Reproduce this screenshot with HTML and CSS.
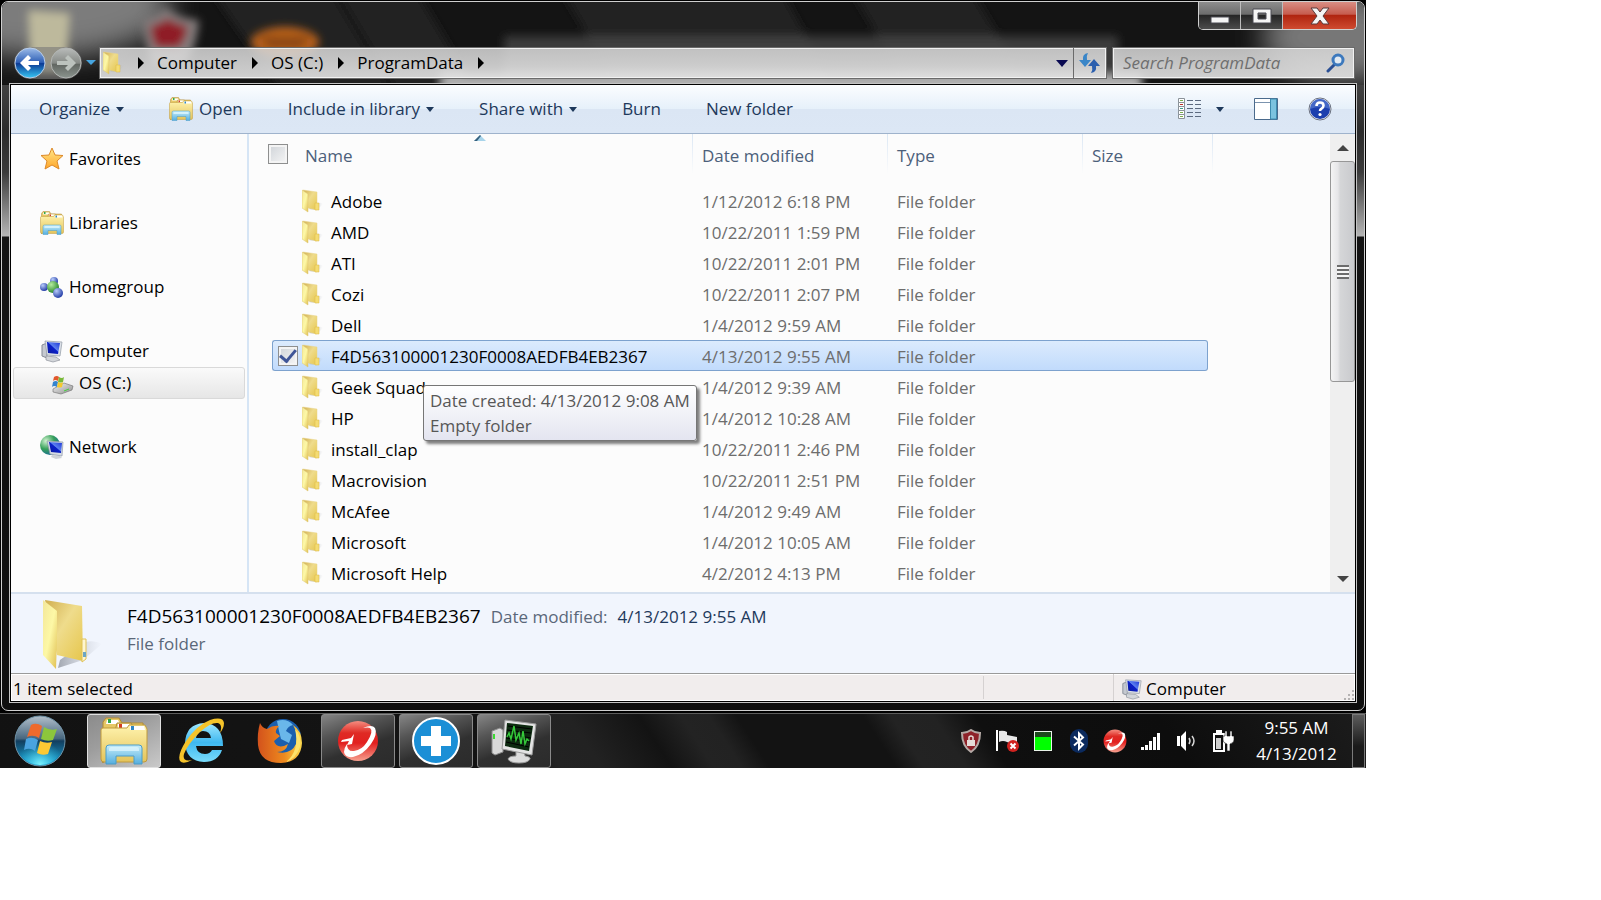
FILE: index.html
```
<!DOCTYPE html>
<html lang="en">

<head>
  <meta charset="UTF-8">
  <meta name="viewport" content="width=device-width, initial-scale=1.0">
  <title>ProgramData</title>
  <link rel="stylesheet" href="styles.css">
</head>

<body>
  <!-- Shared icons -->
  <svg class="sprite" width="0" height="0" aria-hidden="true">
    <defs>
      <linearGradient id="gFlap" x1="0" x2="1" y1="0" y2="1">
        <stop offset="0" stop-color="#f3e79b" />
        <stop offset=".5" stop-color="#fdf8a6" />
        <stop offset="1" stop-color="#e0bf53" />
      </linearGradient>
      <linearGradient id="gBack" x1="0" x2="1" y1="0" y2="1">
        <stop offset="0" stop-color="#d0ae50" />
        <stop offset=".45" stop-color="#efdc8c" />
        <stop offset="1" stop-color="#e6c64c" />
      </linearGradient>
      <linearGradient id="gShade" x1="0" x2="1">
        <stop offset="0" stop-color="#8f949e" stop-opacity=".8" />
        <stop offset="1" stop-color="#b8bcc6" stop-opacity="0" />
      </linearGradient>
      <linearGradient id="gPaper" x1="0" x2="0" y1="0" y2="1">
        <stop offset="0" stop-color="#fff3ae" />
        <stop offset="1" stop-color="#e4c45b" />
      </linearGradient>
      <linearGradient id="gStand" x1="0" x2="0" y1="0" y2="1">
        <stop offset="0" stop-color="#c5edfa" />
        <stop offset="1" stop-color="#55aede" />
      </linearGradient>
      <linearGradient id="gScreen" x1="0" x2="1" y1="1" y2="0">
        <stop offset="0" stop-color="#0a1a9a" />
        <stop offset=".5" stop-color="#0b1fc9" />
        <stop offset=".55" stop-color="#5c80ee" />
        <stop offset="1" stop-color="#1b35d8" />
      </linearGradient>
      <linearGradient id="gStar" x1="0" x2="0" y1="0" y2="1">
        <stop offset="0" stop-color="#ffe98a" />
        <stop offset="1" stop-color="#ffa52a" />
      </linearGradient>
      <linearGradient id="gSteel" x1="0" x2="1" y1="0" y2="1">
        <stop offset="0" stop-color="#f5f5f5" />
        <stop offset="1" stop-color="#8d8d8d" />
      </linearGradient>
      <linearGradient id="gBackBtn" x1="0" x2="0" y1="0" y2="1">
        <stop offset="0" stop-color="#9cbbe8" />
        <stop offset=".48" stop-color="#2f60b6" />
        <stop offset=".52" stop-color="#0b3a94" />
        <stop offset="1" stop-color="#38c8f5" />
      </linearGradient>
      <linearGradient id="gFwdBtn" x1="0" x2="0" y1="0" y2="1">
        <stop offset="0" stop-color="#b9bcba" />
        <stop offset=".5" stop-color="#868a86" />
        <stop offset=".55" stop-color="#626762" />
        <stop offset="1" stop-color="#8b948e" />
      </linearGradient>
      <radialGradient id="gGreenBall" cx=".35" cy=".3" r=".8">
        <stop offset="0" stop-color="#b5eda0" />
        <stop offset="1" stop-color="#157a1c" />
      </radialGradient>
      <radialGradient id="gBlueBall" cx=".35" cy=".3" r=".8">
        <stop offset="0" stop-color="#b9cdfa" />
        <stop offset="1" stop-color="#122c9e" />
      </radialGradient>
      <radialGradient id="gGlobe" cx=".3" cy=".3" r=".9">
        <stop offset="0" stop-color="#d2f3d0" />
        <stop offset=".45" stop-color="#37a05a" />
        <stop offset="1" stop-color="#0c57ae" />
      </radialGradient>
      <linearGradient id="gOrb" x1="0" x2="0" y1="0" y2="1">
        <stop offset="0" stop-color="#b3c0cb" />
        <stop offset=".45" stop-color="#48677f" />
        <stop offset=".5" stop-color="#123e5f" />
        <stop offset="1" stop-color="#17a9dc" />
      </linearGradient>
      <radialGradient id="gOrbGlow" cx=".5" cy="1" r=".5">
        <stop offset="0" stop-color="#7ff4ff" />
        <stop offset="1" stop-color="#2fc4ee" stop-opacity="0" />
      </radialGradient>
      <linearGradient id="gIe" x1="0" x2="0" y1="0" y2="1">
        <stop offset="0" stop-color="#9fe8ff" />
        <stop offset=".5" stop-color="#3fb8f0" />
        <stop offset="1" stop-color="#7adcfb" />
      </linearGradient>
      <linearGradient id="gFox" x1="0" x2="1">
        <stop offset="0" stop-color="#d3521c" />
        <stop offset=".6" stop-color="#ee8a1e" />
        <stop offset="1" stop-color="#fbd84a" />
      </linearGradient>
      <linearGradient id="gRed" x1="0" x2="0" y1="0" y2="1">
        <stop offset="0" stop-color="#f58d80" />
        <stop offset=".3" stop-color="#df2a24" />
        <stop offset=".55" stop-color="#e2201f" />
        <stop offset="1" stop-color="#f7a08f" />
      </linearGradient>

      <symbol id="folder" viewBox="0 0 64 72">
        <path d="M43 62 L62 46 Q55 42 45 44 L20 62 L18 70Z" fill="url(#gShade)" />
        <path d="M5 2 L42 8 L43 63 L17 57Z" fill="url(#gBack)" />
        <path d="M42 41h4v20l-4 3z" fill="#fff6cf" stroke="#dfc257" />
        <path d="M43 54h3v5h-3z" fill="#6ba6c4" />
        <path d="M3 2 L17 13 L17 43 L16 71 L3 57Z" fill="url(#gFlap)" />
      </symbol>

      <symbol id="folder-small" viewBox="0 0 21 24">
        <path d="M15 21l6-6q-2-2-5-1L7 20z" fill="url(#gShade)" />
        <path d="M1 1l14 2v18L6 19z" fill="url(#gBack)" stroke="#e9d58a" stroke-width=".5" />
        <path d="M13 14h4v7h-4z" fill="#f4dc73" stroke="#dcbb45" stroke-width=".5" />
        <path d="M0 1l6 4v18l-6-4z" fill="url(#gFlap)" stroke="#dcc772" stroke-width=".5" />
      </symbol>

      <symbol id="library" viewBox="0 0 48 48">
        <path d="M3 46V5l3-4h13l3 5h21v14H3z" fill="#e6c765" stroke="#b08a35" />
        <path d="M7 3h11l2 4H6z" fill="#fff" />
        <path d="M8 2h3v4H8z" fill="#2fa84a" />
        <path d="M15 14l2-8h14l3 5h10v10H15z" fill="#efd67c" stroke="#b08a35" />
        <path d="M18 7h11l3 4H18z" fill="#fff" />
        <path d="M19 7h3v4h-3z" fill="#d23b23" />
        <path d="M1 13q0-2 2-2h24l2-3h16l2 4v30q0 3-3 3H4q-3 0-3-3z" fill="url(#gPaper)" stroke="#c09a3d" />
        <path d="M30 9h14l1 4H30z" fill="#fff" />
        <path d="M31 9h3v4h-3z" fill="#2f86c4" />
        <path d="M6 47V31q0-3 3-3h30q3 0 3 3v16h-8v-8H16v8z" fill="url(#gStand)" stroke="#4b9cc9" />
        <path d="M9 34v-2q0-2 2-2h26q2 0 2 2v2z" fill="#e3f8ff" opacity=".7" />
      </symbol>

      <symbol id="computer" viewBox="0 0 24 24">
        <path d="M2 6l5-2v15l-5-2z" fill="#c5c9d0" stroke="#858b96" />
        <path d="M6 17l10 1 4 3-7 2-7-2z" fill="#d3d6da" stroke="#8f949c" stroke-width=".7" />
        <path d="M5 2l17 1-2 14-13-1z" fill="#dce1e8" stroke="#9ca3ad" stroke-width=".8" />
        <path d="M7 3l13 1-2 11-10-1z" fill="url(#gScreen)" />
      </symbol>

      <symbol id="trend" viewBox="0 0 42 42">
        <circle cx="21" cy="21" r="20" fill="url(#gRed)" />
        <path d="M26 8q9-4 12 0 3 6-4 16-8 11-18 13-8 1-9-5 0-4 3-8 0 8 7 7 8-1 13-9 7-11 3-14-2-1-7 0z" fill="#fff" />
        <path d="M5 20l9-2 3-4-2 10-5 1 2-4-8 1z" fill="#fff" />
      </symbol>
    </defs>
  </svg>

  <div class="desktop">
    <section class="window" aria-label="ProgramData">
      <!-- What shows through the glass -->
      <svg class="glass" aria-hidden="true">
        <defs>
          <filter id="soft" x="-20%" y="-20%" width="140%" height="140%">
            <feGaussianBlur stdDeviation="4" />
          </filter>
          <filter id="softer" x="-40%" y="-40%" width="180%" height="180%">
            <feGaussianBlur stdDeviation="14" />
          </filter>
        </defs>
        <rect width="100%" height="90" fill="#141414" />
        <g filter="url(#soft)">
          <path d="M210-10h120l60 100H280zM335-10h80l60 100h-80zM560-10h220l55 100H620zM850-10h120l60 100H910z" fill="#242424" />
          <rect x="502" y="34" width="614" height="60" fill="#4c4c4c" opacity=".7" />
          <rect x="440" y="72" width="700" height="20" fill="#b0b0b0" />
        </g>
        <ellipse cx="40" cy="5" rx="130" ry="50" fill="#7b7b7b" filter="url(#softer)" />
        <ellipse cx="1340" cy="35" rx="80" ry="45" fill="#777" filter="url(#softer)" />
        <g filter="url(#soft)">
          <path d="M26 8l42 3-4 60H28z" fill="#bdb99c" />
          <path d="M163 6q14 11 34 12-3 30-15 45h-32q-7-20-9-45 14-3 22-12z" fill="#857f7f" />
          <path d="M165 16q10 6 21 8-2 16-10 22h-22q-5-10-6-22 10-2 17-8z" fill="#8f1f26" />
          <ellipse cx="283" cy="40" rx="34" ry="15" fill="#bd641d" />
          <path d="M258 37h50M264 44h38" stroke="#5b2c0c" stroke-width="4" />
        </g>
      </svg>

      <header class="titlebar">
        <div class="captions">
          <button type="button" class="caption caption-min" aria-label="Minimize">
            <svg width="20" height="20" viewBox="0 0 20 20">
              <path d="M1 11h18v6H1z" fill="#f5f5f5" stroke="#4a4a52" />
            </svg>
          </button>
          <button type="button" class="caption caption-max" aria-label="Maximize">
            <svg width="20" height="18" viewBox="0 0 20 18">
              <path d="M1 2h18v14H1zM6 6v6h8V6z" fill="#f5f5f5" stroke="#4a4a52" fill-rule="evenodd" />
            </svg>
          </button>
          <button type="button" class="caption caption-close" aria-label="Close">
            <svg width="20" height="18" viewBox="0 0 20 18">
              <path d="M1 1h6l3 4 3-4h6l-6 8 6 8h-6l-3-4-3 4H1l6-8z" fill="#f5f5f5" stroke="#5a3b3b" />
            </svg>
          </button>
        </div>

        <div class="nav-row">
          <div class="nav-buttons">
            <button type="button" class="round" aria-label="Back">
              <svg width="32" height="32" viewBox="0 0 32 32">
                <circle cx="16" cy="16" r="15" fill="url(#gBackBtn)" stroke="#b9cde8" />
                <path d="M6 16l8-8 3 3-3 3h11v4H14l3 3-3 3z" fill="#fff" />
              </svg>
            </button>
            <button type="button" class="round" aria-label="Forward">
              <svg width="32" height="32" viewBox="0 0 32 32">
                <circle cx="16" cy="16" r="15" fill="url(#gFwdBtn)" stroke="#b3b6b4" />
                <path d="M26 16l-8-8-3 3 3 3H7v4h11l-3 3 3 3z" fill="#bcc2bd" />
              </svg>
            </button>
          </div>
          <button type="button" class="recent" aria-label="Recent pages">
            <svg width="10" height="6" viewBox="0 0 10 6">
              <path d="M0 0h10L5 5z" fill="#46a5e0" />
            </svg>
          </button>

          <nav class="address" aria-label="Address">
            <svg class="address-icon" width="21" height="24">
              <use href="#folder-small" />
            </svg>
            <span class="crumb-arrow"></span>
            <a class="crumb" href="#">Computer</a>
            <span class="crumb-arrow"></span>
            <a class="crumb" href="#">OS (C:)</a>
            <span class="crumb-arrow"></span>
            <a class="crumb" href="#">ProgramData</a>
            <span class="crumb-arrow"></span>
            <button type="button" class="address-drop" aria-label="Previous locations">
              <svg width="12" height="7" viewBox="0 0 12 7">
                <path d="M0 0h12L6 7z" fill="#0a0a52" />
              </svg>
            </button>
            <button type="button" class="refresh" aria-label="Refresh">
              <svg width="22" height="20" viewBox="0 0 22 20">
                <path d="M9 0Q3 1 4 7H0l6 7 6-7H8Q7 3 9 0z" fill="#3a86c8" />
                <path d="M12 20q6-1 5-7h4l-6-7-6 7h4q1 4-1 7z" fill="#2b5fae" />
              </svg>
            </button>
          </nav>

          <div class="search">
            <input type="search" placeholder="Search ProgramData" aria-label="Search ProgramData">
            <svg width="20" height="20" viewBox="0 0 20 20">
              <path d="M8 12l-6 6" stroke="#2a4f94" stroke-width="3" stroke-linecap="round" />
              <circle cx="12" cy="7" r="5" fill="#e2eaf2" stroke="#3d79bd" stroke-width="3" />
            </svg>
          </div>
        </div>
      </header>

      <div class="frame">
        <div class="toolbar">
          <button type="button" class="tool">Organize <span class="caret"></span></button>
          <button type="button" class="tool">
            <svg width="24" height="24">
              <use href="#library" />
            </svg>
            Open
          </button>
          <button type="button" class="tool">Include in library <span class="caret"></span></button>
          <button type="button" class="tool">Share with <span class="caret"></span></button>
          <button type="button" class="tool">Burn</button>
          <button type="button" class="tool">New folder</button>

          <div class="tool-icons">
            <button type="button" class="tool-icon" aria-label="Change your view">
              <svg width="24" height="22" viewBox="0 0 24 22">
                <path d="M.5.5h6v4h-6zM.5 4.500h6v4h-6zM.5 8.500h6v4h-6zM.5 12.500h6v4h-6zM.5 16.500h6v4h-6z" fill="#fff" stroke="#8a9299" />
                <path d="M2 2.500h3M2 14.500h3M2 18.500h3" stroke="#7bb04a" />
                <path d="M2 6.500h3" stroke="#c03028" />
                <path d="M2 10.500h3" stroke="#3e9a8a" />
                <path d="M9 2.500h6M17 2.500h6M9 6.500h6M17 6.500h6M9 10.500h6M17 10.500h6M9 14.500h6M17 14.500h6M9 18.500h6M17 18.500h6" stroke="#5d6b80" />
              </svg>
            </button>
            <button type="button" class="tool-icon" aria-label="More view options"><span class="caret"></span></button>
            <button type="button" class="tool-icon preview" aria-label="Show the preview pane">
              <svg width="24" height="22" viewBox="0 0 24 22">
                <path d="M.5.5h23v21H.5z" fill="#fff" stroke="#4a6a8c" />
                <path d="M1 4.500h15" stroke="#7b93ae" />
                <path d="M16.500 1h6v20h-6z" fill="#7cc3df" stroke="#3e8db0" />
              </svg>
            </button>
            <button type="button" class="tool-icon help" aria-label="Help">
              <svg width="24" height="24" viewBox="0 0 24 24">
                <circle cx="12" cy="12" r="11" fill="#f2f4f8" stroke="#6a7180" />
                <circle cx="12" cy="12" r="10" fill="#1c3fae" />
                <path d="M2 12a10 10 0 0 1 20 0q-10-4-20 0z" fill="#5f83d6" opacity=".6" />
                <path d="M8.500 9q0-3.500 3.500-3.500t3.500 3q0 2-2 3.200-1.500 1-1.500 2.300" fill="none" stroke="#fff" stroke-width="2.600" />
                <circle cx="12" cy="17.500" r="1.600" fill="#fff" />
              </svg>
            </button>
          </div>
        </div>

        <div class="browser">
          <nav class="sidebar" aria-label="Navigation pane">
            <a class="place" href="#">
              <svg width="24" height="24" viewBox="0 0 24 24">
                <path d="M12 1l3 7 8 .5-6 5.500 2 8-7-4-7 4 2-8-6-5.500L9 8z" fill="url(#gStar)" stroke="#dd8a2a" />
              </svg>
              Favorites
            </a>
            <a class="place" href="#">
              <svg width="24" height="24">
                <use href="#library" />
              </svg>
              Libraries
            </a>
            <a class="place" href="#">
              <svg width="24" height="24" viewBox="0 0 24 24">
                <circle cx="14" cy="6" r="4" fill="url(#gBlueBall)" />
                <circle cx="4" cy="12" r="4" fill="url(#gBlueBall)" />
                <circle cx="13" cy="12" r="6" fill="url(#gGreenBall)" />
                <circle cx="18" cy="18" r="5" fill="url(#gBlueBall)" />
              </svg>
              Homegroup
            </a>
            <div class="place-group">
              <a class="place" href="#">
                <svg width="24" height="24">
                  <use href="#computer" />
                </svg>
                Computer
              </a>
              <a class="place place-sub" href="#" aria-current="true">
                <svg width="24" height="24" viewBox="0 0 24 24">
                  <path d="M3 18l11-6 9 3-1 4-11 4-8-2z" fill="url(#gSteel)" stroke="#6c6c6c" stroke-width=".6" />
                  <path d="M14 20l5-2" stroke="#42d13a" />
                  <path d="M4 6q3-2 5 0l-1 4q-3-2-5 0z" fill="#e2572b" />
                  <path d="M9 6q3 2 5 0l-1 5q-3 1-5 0z" fill="#79b938" />
                  <path d="M3 11q3-2 5 0l-1 5q-3-2-5 0z" fill="#3484ce" />
                  <path d="M8 11q3 2 5 0l-1 5q-3 1-5 0z" fill="#f5c92f" />
                </svg>
                OS (C:)
              </a>
            </div>
            <a class="place" href="#">
              <svg width="24" height="24" viewBox="0 0 24 24">
                <circle cx="10" cy="10" r="10" fill="url(#gGlobe)" />
                <path d="M12 20l8 1 2 2-6 1-5-2z" fill="#cfd3d8" />
                <path d="M7 6l16 1-1 14-12-2z" fill="#d5dbe4" stroke="#8f98a6" stroke-width=".7" />
                <path d="M9 7l13 1-1 10-10-1z" fill="url(#gScreen)" />
              </svg>
              Network
            </a>
          </nav>

          <div class="files">
            <table class="file-table">
              <colgroup>
                <col class="col-name">
                <col class="col-date">
                <col class="col-type">
                <col class="col-size">
              </colgroup>
              <thead>
                <tr>
                  <th scope="col">
                    <div class="head-name">
                      <input type="checkbox" aria-label="Select all items">
                      Name
                      <svg class="sort" width="12" height="6" viewBox="0 0 12 6">
                        <path d="M6 0l6 6H0z" fill="#a8d4ea" />
                        <path d="M6 0L0 6h3l4-5z" fill="#36617e" />
                      </svg>
                    </div>
                  </th>
                  <th scope="col">Date modified</th>
                  <th scope="col">Type</th>
                  <th scope="col">Size</th>
                </tr>
              </thead>
              <tbody id="fileRows"></tbody>
            </table>

            <div class="tooltip" role="tooltip">
              Date created: 4/13/2012 9:08 AM<br>
              Empty folder
            </div>
          </div>

          <div class="scrollbar">
            <button type="button" class="scroll-btn" aria-label="Scroll up">
              <svg width="12" height="6" viewBox="0 0 12 6">
                <path d="M6 0l6 6H0z" fill="#444" />
              </svg>
            </button>
            <div class="thumb"><span class="grip"></span></div>
            <button type="button" class="scroll-btn scroll-down" aria-label="Scroll down">
              <svg width="12" height="6" viewBox="0 0 12 6">
                <path d="M0 0h12L6 6z" fill="#444" />
              </svg>
            </button>
          </div>
        </div>

        <div class="details">
          <svg width="64" height="72">
            <use href="#folder" />
          </svg>
          <div class="details-text">
            <div class="details-line">
              <span class="details-name">F4D563100001230F0008AEDFB4EB2367</span>
              <span>Date modified:</span>
              <span class="details-value">4/13/2012 9:55 AM</span>
            </div>
            <div>File folder</div>
          </div>
        </div>

        <footer class="status">
          <div class="status-main">1 item selected</div>
          <div class="status-gap"></div>
          <div class="status-zone">
            <svg width="22" height="22">
              <use href="#computer" />
            </svg>
            Computer
            <svg class="resize" width="12" height="12" viewBox="0 0 12 12">
              <path d="M9 1h2v2H9zM5 5h2v2H5zM9 5h2v2H9zM1 9h2v2H1zM5 9h2v2H5zM9 9h2v2H9z" fill="#b5b2b2" />
            </svg>
          </div>
        </footer>
      </div>
    </section>

    <footer class="taskbar">
      <button type="button" class="start" aria-label="Start">
        <svg width="52" height="52" viewBox="0 0 52 52">
          <circle cx="26" cy="26" r="25" fill="url(#gOrb)" stroke="#6f93a8" />
          <circle cx="26" cy="26" r="24" fill="url(#gOrbGlow)" />
          <path d="M17 10q5-3 11 1l-3 12q-6-4-12-1z" fill="#ee6a2c" />
          <path d="M30 12q6 4 13 2l-4 11q-6 2-12-1z" fill="#8cc63c" />
          <path d="M12 24q6-3 12 1l-3 11q-5-4-11-1z" fill="#4aa3e0" />
          <path d="M26 26q6 3 12 1l-4 12q-6 2-11-1z" fill="#fcc934" />
        </svg>
      </button>

      <button type="button" class="task task-active" aria-label="Windows Explorer">
        <svg width="48" height="48">
          <use href="#library" />
        </svg>
      </button>
      <button type="button" class="task" aria-label="Internet Explorer">
        <svg width="46" height="48" viewBox="0 0 46 48">
          <path d="M44 29H17q1 8 9 8 5 0 7-4h10q-4 12-18 12Q7 44 6 26 7 7 25 6q19 1 19 23zM17 21h15q-1-7-8-7-6 0-7 7z" fill="url(#gIe)" fill-rule="evenodd" />
          <path d="M13 43Q4 48 1 44-2 38 7 24 18 8 31 3q13-4 14 3 0 5-4 10 3-8-2-10-7-1-18 9Q8 28 5 37q-2 8 8 6z" fill="#f5c32a" />
        </svg>
      </button>
      <button type="button" class="task" aria-label="Firefox">
        <svg width="46" height="48" viewBox="0 0 46 48">
          <circle cx="26" cy="20" r="18" fill="#1a5fae" />
          <path d="M20 4q10-3 16 4-5 1-7 6l6 4-3 8-8-4-2-8z" fill="#69b7ea" />
          <path d="M3 6q2 5 7 6 6-4 12-3-4 4-3 7l4 3-6 5q2 7 10 5l4-2q-2 8-11 8 14 3 19-8 3-9-3-19 9 6 9 18-1 19-21 20Q3 46 1 28 0 16 3 6z" fill="url(#gFox)" />
          <path d="M38 12q7 7 5 18-4 12-14 15 14-11 9-33z" fill="#fde36c" />
        </svg>
      </button>
      <button type="button" class="task task-open" aria-label="Trend Micro">
        <svg width="42" height="42">
          <use href="#trend" />
        </svg>
      </button>
      <button type="button" class="task task-open" aria-label="Support">
        <svg width="48" height="48" viewBox="0 0 48 48">
          <circle cx="24" cy="24" r="23" fill="#1b8fd6" stroke="#fff" stroke-width="2" />
          <path d="M19 9h10v10h10v10H29v10H19V29H9V19h10z" fill="#fff" />
        </svg>
      </button>
      <button type="button" class="task task-open" aria-label="Resource Monitor">
        <svg width="46" height="46" viewBox="0 0 46 46">
          <path d="M1 13l8-3 3 2v22l-8 3-3-2z" fill="#d9d9d9" stroke="#8a8a8a" />
          <path d="M3 16v5" stroke="#3ddc34" stroke-width="2" />
          <path d="M25 33h8l1 5q6 1 5 3-2 4-11 4t-11-4q1-3 8-3z" fill="#dcdcdc" stroke="#9b9b9b" />
          <path d="M14 2l31 4-4 31-30-6z" fill="#e4e4e4" stroke="#9b9b9b" />
          <path d="M16 5l26 3-4 25-24-5z" fill="#0d2a10" />
          <path d="M17 8l24 3M16 12l24 3M16 16l24 4M15 20l24 4M15 24l23 5" stroke="#000" />
          <path d="M16 19l2-4 2 6 3-13 2 14 3-7 2 11 2-13 2 13 2-5 2 2" fill="none" stroke="#35c93a" stroke-width="1.500" />
        </svg>
      </button>

      <div class="tray">
        <button type="button" class="tray-icon" aria-label="Security">
          <svg width="20" height="24" viewBox="0 0 20 24">
            <path d="M10 1q4 3 9 3 0 13-9 19Q1 17 1 4q5 0 9-3z" fill="#8e2229" stroke="#b5aaa6" stroke-width="2" />
            <path d="M6 11h8v6H6z" fill="#e6dcd8" />
            <path d="M8 11V8q2-2 4 0v3" fill="none" stroke="#e6dcd8" stroke-width="1.500" />
          </svg>
        </button>
        <button type="button" class="tray-icon" aria-label="Action Center">
          <svg width="24" height="24" viewBox="0 0 24 24">
            <path d="M1 1h2v21H1z" fill="#fff" />
            <path d="M4 2q5-1 8 1v3l10 2v6q-5 2-10-1-4-2-8 0z" fill="#e9e9e9" />
            <circle cx="18" cy="17" r="6" fill="#d0221f" />
            <path d="M15.500 14.500l5 5m0-5l-5 5" stroke="#fff" stroke-width="2" />
          </svg>
        </button>
        <button type="button" class="tray-icon" aria-label="Activity">
          <svg width="18" height="20" viewBox="0 0 18 20">
            <path d="M0 0h18v20H0z" fill="#e9f3e9" />
            <path d="M1 1h16v5H1z" fill="#1c4a1c" />
            <path d="M1 6h16v13H1z" fill="#00ff00" />
          </svg>
        </button>
        <button type="button" class="tray-icon" aria-label="Bluetooth">
          <svg width="18" height="24" viewBox="0 0 18 24">
            <rect width="18" height="24" rx="9" fill="#0b2a5e" />
            <path d="M4 7.500l9 8-4 4v-15l4 4-9 8" fill="none" stroke="#fff" stroke-width="2" />
          </svg>
        </button>
        <button type="button" class="tray-icon" aria-label="Trend Micro">
          <svg width="24" height="24">
            <use href="#trend" />
          </svg>
        </button>
        <button type="button" class="tray-icon" aria-label="Network">
          <svg width="20" height="18" viewBox="0 0 20 18">
            <path d="M0 15h3v3H0zM4 13h3v5H4zM8 9h3v9H8zM12 5h3v13h-3zM16 1h3v17h-3z" fill="#fff" />
          </svg>
        </button>
        <button type="button" class="tray-icon" aria-label="Volume">
          <svg width="22" height="22" viewBox="0 0 22 22">
            <path d="M1 6h3v10H1zM5 6l5-5v20l-5-5z" fill="#fff" />
            <path d="M13 8q2 3 0 6M16 6q4 5 0 10" fill="none" stroke="#d5d5d5" stroke-width="1.500" />
          </svg>
        </button>
        <button type="button" class="tray-icon" aria-label="Power">
          <svg width="22" height="22" viewBox="0 0 22 22">
            <path d="M2 4h10v17H2zM5 1h4v2H5z" fill="none" stroke="#fff" stroke-width="2" />
            <path d="M4 8h5v11H4z" fill="#cfcfcf" />
            <path d="M13 1h2v5h3V1h2v5h2v4q0 3-4 4v7h-3v-7q-4-1-4-4V6h2z" fill="#fff" stroke="#111" stroke-width=".6" />
          </svg>
        </button>
      </div>

      <button type="button" class="clock">9:55 AM<br>4/13/2012</button>
      <button type="button" class="show-desktop" aria-label="Show desktop"></button>
    </footer>
  </div>

  <script>
    const files = [
      ['Adobe', '1/12/2012 6:18 PM'],
      ['AMD', '10/22/2011 1:59 PM'],
      ['ATI', '10/22/2011 2:01 PM'],
      ['Cozi', '10/22/2011 2:07 PM'],
      ['Dell', '1/4/2012 9:59 AM'],
      ['F4D563100001230F0008AEDFB4EB2367', '4/13/2012 9:55 AM', true],
      ['Geek Squad', '1/4/2012 9:39 AM'],
      ['HP', '1/4/2012 10:28 AM'],
      ['install_clap', '10/22/2011 2:46 PM'],
      ['Macrovision', '10/22/2011 2:51 PM'],
      ['McAfee', '1/4/2012 9:49 AM'],
      ['Microsoft', '1/4/2012 10:05 AM'],
      ['Microsoft Help', '4/2/2012 4:13 PM'],
      ['', '']
    ];

    // Build the folder list
    document.getElementById('fileRows').innerHTML = files.map(([name, date, selected]) => `
      <tr class="${selected ? 'selected' : ''}">
        <td>
          <label class="entry">
            <input type="checkbox" ${selected ? 'checked' : ''}>
            <svg width="21" height="24"><use href="#folder-small" /></svg>
            <span class="file-name">${name}</span>
          </label>
        </td>
        <td>${date}</td>
        <td>${name ? 'File folder' : ''}</td>
        <td><div class="row-end"></div></td>
      </tr>
    `).join('');
  </script>
</body>

</html>
```

FILE: styles.css
```
* {
  margin: 0;
  padding: 0;
  box-sizing: border-box;
}

body {
  font-family: "Open Sans", "Noto Sans", sans-serif;
  font-size: 17px;
  line-height: 24px;
  background: #fff;
  color: #000;
}

button {
  font: inherit;
  color: inherit;
  background: none;
  border: none;
  cursor: pointer;
}

a {
  color: inherit;
  text-decoration: none;
}

svg {
  display: block;
  flex: none;
}

.sprite {
  position: absolute;
}

.desktop {
  max-width: 1366px;
  padding-top: 1px;
  background: #000;
}

/* Window */
.window {
  position: relative;
  margin: 0 1px 2px;
  padding: 0 7px 7px;
  border: 1px solid #cfcfcf;
  border-radius: 7px;
  overflow: hidden;
  background: linear-gradient(#6a6a6a 0, #2b2b2b 130px, #3a3a3a 170px, #b5b5b5 234px, #141414 235px, #0e0e0e 100%);
}

.glass {
  position: absolute;
  top: 0;
  left: 0;
  width: 100%;
  height: 83px;
}

.titlebar {
  position: relative;
  display: flex;
  flex-direction: column;
  gap: 17px;
  padding-bottom: 4px;
}

.captions {
  display: flex;
  align-self: flex-end;
  height: 28px;
  border: 1px solid #d0d0d0;
  border-top: none;
  border-radius: 0 0 5px 5px;
  overflow: hidden;
}

.caption {
  display: flex;
  align-items: center;
  justify-content: center;
  width: 42px;
  background: linear-gradient(#8d8d8d 0, #6c6c6c 45%, #262626 50%, #4c4c4c 100%);
  border-right: 1px solid #bdbdbd;
}

.caption-close {
  width: 73px;
  background: linear-gradient(#d98e84 0, #c65c4e 45%, #b02510 50%, #cf4a30 100%);
  border-right: none;
}

.nav-row {
  display: flex;
  align-items: center;
  padding: 0 2px 0 5px;
}

.nav-buttons {
  display: flex;
  gap: 4px;
  background: rgba(120, 120, 120, 0.6);
  border-radius: 16px;
}

.round {
  width: 32px;
  height: 32px;
}

.recent {
  width: 17px;
  display: flex;
  justify-content: center;
}

.address,
.search {
  display: flex;
  align-items: center;
  height: 32px;
  background: linear-gradient(rgba(215, 215, 215, 0.85), rgba(228, 228, 228, 0.9));
  border: 1px solid #6b6b6b;
  box-shadow: inset 0 0 0 1px #f2f2f2;
}

.address {
  flex: 1;
  padding-left: 3px;
}

.address-icon {
  margin-right: 14px;
}

.crumb-arrow {
  border: 6px solid transparent;
  border-left-color: #000;
  border-right: none;
}

.crumb {
  margin: 0 15px 0 13px;
}

.address-drop {
  margin-left: auto;
  padding: 0 5px;
}

.refresh {
  display: flex;
  align-items: center;
  justify-content: center;
  align-self: stretch;
  width: 33px;
  border-left: 1px solid #6b6b6b;
}

.search {
  width: 243px;
  margin-left: 5px;
  padding: 0 8px 0 10px;
}

.search input {
  flex: 1;
  min-width: 0;
  font: inherit;
  font-style: italic;
  background: none;
  border: none;
  outline: none;
}

.search input::placeholder {
  color: #6f6f6f;
}

.frame {
  position: relative;
  border: 1px solid #c4c4c4;
  outline: 1px solid #000;
  outline-offset: -2px;
  padding: 1px;
  background: #000;
}

/* Command bar */
.toolbar {
  display: flex;
  align-items: center;
  height: 49px;
  padding: 0 23px 0 28px;
  gap: 45px;
  background: linear-gradient(#fbfdff 0, #e6f0fa 50%, #dbe6f4 51%, #dce7f5 100%);
  border-bottom: 1px solid #9fb3cc;
  color: #1e395b;
}

.tool {
  display: flex;
  align-items: center;
  gap: 6px;
  white-space: nowrap;
}

.caret {
  border: 4px solid transparent;
  border-top: 5px solid #1e395b;
  border-bottom: none;
}

.tool-icons {
  display: flex;
  align-items: center;
  margin-left: auto;
}

.tool-icon {
  display: flex;
  margin-left: 14px;
}

.preview,
.help {
  margin-left: 30px;
}

/* Folder browser */
.browser {
  display: flex;
  height: 458px;
  background: #fcfcfc;
}

.sidebar {
  flex: none;
  display: flex;
  flex-direction: column;
  gap: 32px;
  width: 238px;
  padding: 9px 2px;
  border-right: 2px solid #d6e5f5;
}

.place {
  display: flex;
  align-items: center;
  gap: 5px;
  height: 32px;
  padding-left: 27px;
}

.place-sub {
  padding-left: 36px;
  border: 1px solid #d9d9d9;
  border-radius: 3px;
  background: linear-gradient(#fafafa, #e6e6e6);
}

.files {
  position: relative;
  flex: 1;
  min-width: 0;
  overflow: hidden;
  padding-left: 19px;
}

.file-table {
  width: 945px;
  table-layout: fixed;
  border-spacing: 0;
}

.col-name {
  width: 425px;
}

.col-date,
.col-type {
  width: 195px;
}

.col-size {
  width: 130px;
}

.file-table th {
  height: 51px;
  padding: 10px 9px 0;
  vertical-align: top;
  text-align: left;
  font-weight: normal;
  color: #4c607a;
  background: linear-gradient(#dbe7f4, #fcfcfc) no-repeat right top / 1px 40px;
}

.file-table th:first-child {
  padding-left: 0;
}

.head-name {
  display: flex;
  gap: 17px;
}

.sort {
  position: absolute;
  top: 1px;
  left: 225px;
}

input[type="checkbox"] {
  appearance: none;
  flex: none;
  width: 20px;
  height: 20px;
  border: 1px solid #8e8f8f;
  background: linear-gradient(135deg, #cfd3d8, #f6f6f6);
  box-shadow: inset 0 0 0 2px #f4f4f4;
}

input[type="checkbox"]:checked {
  display: flex;
  align-items: center;
  justify-content: center;
}

input[type="checkbox"]:checked::before {
  content: '';
  width: 7px;
  height: 13px;
  margin-bottom: 4px;
  border: solid #3f5597;
  border-width: 0 3px 3px 0;
  transform: rotate(40deg);
}

.file-table td {
  height: 31px;
  padding: 2px 9px 0;
  color: #6d6d6d;
}

.file-table td:first-child,
.file-table td:last-child {
  padding: 0;
}

.entry {
  display: flex;
  align-items: center;
  gap: 4px;
  height: 31px;
  margin-left: 4px;
  padding-left: 5px;
  border: 1px solid transparent;
  border-right: none;
  color: #000;
}

.entry input {
  visibility: hidden;
}

.file-name {
  padding: 2px 0 0 4px;
}

.row-end {
  height: 31px;
  margin-right: 5px;
}

.selected .entry,
.selected td:nth-child(2),
.selected td:nth-child(3),
.selected .row-end {
  background: linear-gradient(#dcebfd, #c1dbfc);
  border: solid #7da2ce;
  border-width: 1px 0;
}

.selected .entry {
  border-left-width: 1px;
  border-radius: 3px 0 0 3px;
}

.selected .row-end {
  border-right-width: 1px;
  border-radius: 0 3px 3px 0;
}

.selected input {
  visibility: visible;
}

.tooltip {
  position: absolute;
  top: 251px;
  left: 174px;
  padding: 2px 6px;
  line-height: 25px;
  white-space: nowrap;
  color: #575757;
  background: linear-gradient(#fff, #e4e5f0);
  border: 1px solid #767676;
  border-radius: 3px;
  box-shadow: 3px 3px 3px rgba(0, 0, 0, 0.5);
}

.scrollbar {
  flex: none;
  display: flex;
  flex-direction: column;
  width: 25px;
  background: #efefef;
}

.scroll-btn {
  display: flex;
  align-items: center;
  justify-content: center;
  height: 27px;
}

.scroll-down {
  margin-top: auto;
}

.thumb {
  display: flex;
  align-items: center;
  justify-content: center;
  height: 221px;
  border: 1px solid #979797;
  border-radius: 3px;
  background: linear-gradient(90deg, #f4f4f4 0, #e6e6e8 30%, #d5d6d8 40%, #c9cacd 100%);
}

.grip {
  width: 12px;
  height: 14px;
  background: repeating-linear-gradient(#6c6c6c 0, #6c6c6c 2px, #f5f5f5 2px, #f5f5f5 4px);
}

/* Details pane */
.details {
  display: flex;
  align-items: center;
  gap: 23px;
  height: 81px;
  padding-left: 29px;
  background: #f1f5fd;
  border-top: 2px solid #d5e0ee;
  color: #5a6779;
}

.details-text {
  align-self: flex-start;
  padding-top: 9px;
  line-height: 27px;
}

.details-line {
  display: flex;
  flex-wrap: wrap;
  gap: 10px;
}

.details-name {
  font-size: 19px;
  color: #000;
}

.details-value {
  color: #1e395b;
}

.status {
  display: flex;
  height: 28px;
  border-top: 1px solid #9a9a9a;
  background: #f1eded;
  box-shadow: inset 0 0 0 1px #fff;
  line-height: 30px;
}

.status-main {
  flex: 1;
  padding-left: 2px;
}

.status-gap {
  width: 130px;
  margin: 2px 0;
  border-left: 1px solid #d5d1d1;
}

.status-zone {
  display: flex;
  align-items: center;
  gap: 3px;
  width: 242px;
  padding: 2px 0 0 7px;
  border-left: 1px solid #d5d1d1;
}

.resize {
  align-self: flex-end;
  margin-left: auto;
}

/* Taskbar */
.taskbar {
  display: flex;
  height: 55px;
  padding: 0 1px 0 14px;
  gap: 4px;
  border-top: 1px solid #5c5c5c;
  background: linear-gradient(57deg, #121212 0, #141414 38%, #232323 40%, #222 43%, #131313 48%, #232323 51%, #222 53%, #131313 55%, #131313 64%, #232323 66%, #222 69%, #0f0f0f 72%, #0d0d0d 85%, #1c1c1c 100%);
}

.start {
  width: 69px;
}

.task {
  display: flex;
  align-items: center;
  justify-content: center;
  width: 74px;
  border: 1px solid transparent;
  border-radius: 3px;
}

.task-open {
  border-color: #8a8a8a;
  background: linear-gradient(160deg, #858585 0, #555 30%, #303030 60%, #2b2b2b 100%);
}

.task-active {
  border-color: #e0e0e0;
  background: linear-gradient(150deg, #8b8b8b 0, #9d9d9d 40%, #c9c9c9 100%);
}

.tray {
  display: flex;
  margin-left: auto;
}

.tray-icon {
  display: flex;
  align-items: center;
  justify-content: center;
  width: 36px;
}

.clock {
  width: 103px;
  line-height: 26px;
  color: #fff;
}

.show-desktop {
  width: 13px;
  border: 1px solid #7a7a7a;
  background: linear-gradient(#5c5c5c, #1a1a1a 60%);
}
```
